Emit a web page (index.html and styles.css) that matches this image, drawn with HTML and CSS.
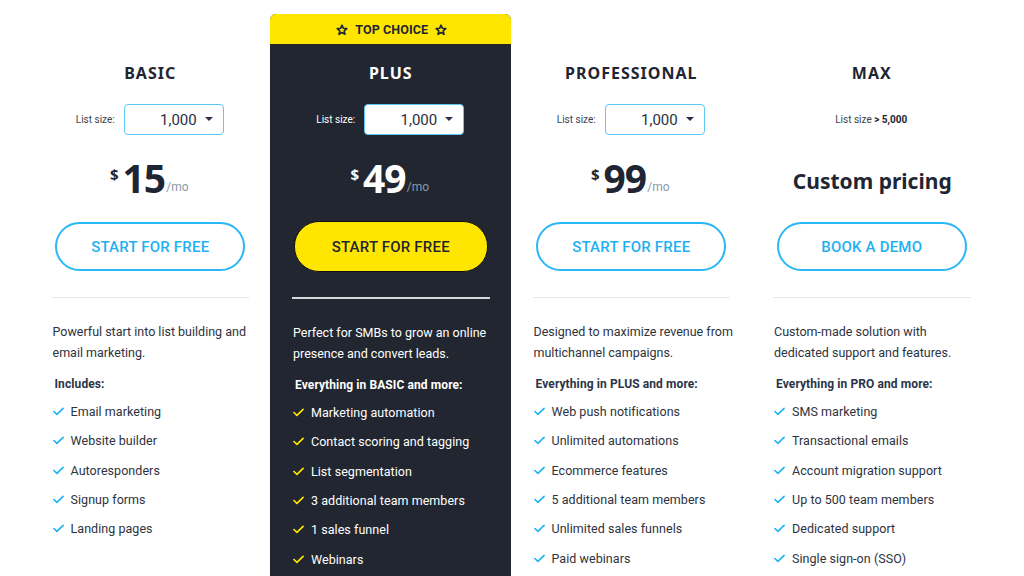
FILE: index.html
```html
<!DOCTYPE html>
<html>
<head>
<meta charset="utf-8">
<link rel="stylesheet" href="styles.css">
</head>
<body>
<svg width="0" height="0" class="defs">
  <defs>
    <symbol id="check" viewBox="0 0 12 9"><path d="M1 4.5 L4.3 7.6 L11 1" fill="none" stroke="currentColor" stroke-width="1.8" stroke-linecap="round" stroke-linejoin="round"/></symbol>
    <symbol id="star" viewBox="0 0 12 12"><path d="M6 1.2 L7.4 4.3 L10.8 4.6 L8.2 6.9 L9 10.3 L6 8.5 L3 10.3 L3.8 6.9 L1.2 4.6 L4.6 4.3 Z" fill="none" stroke="currentColor" stroke-width="1.6" stroke-linejoin="round"/></symbol>
    <symbol id="caret" viewBox="0 0 8 4"><path d="M0 0 H8 L4 4 Z" fill="currentColor"/></symbol>
  </defs>
</svg>
<main class="plans">
  <section class="plan">
    <div class="banner"></div>
    <h2 class="title">BASIC</h2>
    <div class="size-row">
      <span class="size-label">List size:</span>
      <div class="select"><span>1,000</span><svg class="caret"><use href="#caret"/></svg></div>
    </div>
    <div class="price"><span class="cur">$</span><span class="amount">15</span><span class="per">/mo</span></div>
    <a class="btn">START FOR FREE</a>
    <hr class="divider">
    <p class="desc">Powerful start into list building and email marketing.</p>
    <h3 class="inc">Includes:</h3>
    <ul class="features">
      <li><svg class="chk"><use href="#check"/></svg>Email marketing</li>
      <li><svg class="chk"><use href="#check"/></svg>Website builder</li>
      <li><svg class="chk"><use href="#check"/></svg>Autoresponders</li>
      <li><svg class="chk"><use href="#check"/></svg>Signup forms</li>
      <li><svg class="chk"><use href="#check"/></svg>Landing pages</li>
    </ul>
  </section>
  <section class="plan featured">
    <div class="banner"><svg class="star"><use href="#star"/></svg><span>TOP CHOICE</span><svg class="star"><use href="#star"/></svg></div>
    <h2 class="title">PLUS</h2>
    <div class="size-row">
      <span class="size-label">List size:</span>
      <div class="select"><span>1,000</span><svg class="caret"><use href="#caret"/></svg></div>
    </div>
    <div class="price"><span class="cur">$</span><span class="amount">49</span><span class="per">/mo</span></div>
    <a class="btn">START FOR FREE</a>
    <hr class="divider">
    <p class="desc">Perfect for SMBs to grow an online presence and convert leads.</p>
    <h3 class="inc">Everything in BASIC and more:</h3>
    <ul class="features">
      <li><svg class="chk"><use href="#check"/></svg>Marketing automation</li>
      <li><svg class="chk"><use href="#check"/></svg>Contact scoring and tagging</li>
      <li><svg class="chk"><use href="#check"/></svg>List segmentation</li>
      <li><svg class="chk"><use href="#check"/></svg>3 additional team members</li>
      <li><svg class="chk"><use href="#check"/></svg>1 sales funnel</li>
      <li><svg class="chk"><use href="#check"/></svg>Webinars</li>
    </ul>
  </section>
  <section class="plan">
    <div class="banner"></div>
    <h2 class="title">PROFESSIONAL</h2>
    <div class="size-row">
      <span class="size-label">List size:</span>
      <div class="select"><span>1,000</span><svg class="caret"><use href="#caret"/></svg></div>
    </div>
    <div class="price"><span class="cur">$</span><span class="amount">99</span><span class="per">/mo</span></div>
    <a class="btn">START FOR FREE</a>
    <hr class="divider">
    <p class="desc">Designed to maximize revenue from multichannel campaigns.</p>
    <h3 class="inc">Everything in PLUS and more:</h3>
    <ul class="features">
      <li><svg class="chk"><use href="#check"/></svg>Web push notifications</li>
      <li><svg class="chk"><use href="#check"/></svg>Unlimited automations</li>
      <li><svg class="chk"><use href="#check"/></svg>Ecommerce features</li>
      <li><svg class="chk"><use href="#check"/></svg>5 additional team members</li>
      <li><svg class="chk"><use href="#check"/></svg>Unlimited sales funnels</li>
      <li><svg class="chk"><use href="#check"/></svg>Paid webinars</li>
    </ul>
  </section>
  <section class="plan">
    <div class="banner"></div>
    <h2 class="title">MAX</h2>
    <div class="size-row">
      <span class="size-text">List size <b>&gt; 5,000</b></span>
    </div>
    <div class="price"><span class="custom">Custom pricing</span></div>
    <a class="btn">BOOK A DEMO</a>
    <hr class="divider">
    <p class="desc">Custom-made solution with dedicated support and features.</p>
    <h3 class="inc">Everything in PRO and more:</h3>
    <ul class="features">
      <li><svg class="chk"><use href="#check"/></svg>SMS marketing</li>
      <li><svg class="chk"><use href="#check"/></svg>Transactional emails</li>
      <li><svg class="chk"><use href="#check"/></svg>Account migration support</li>
      <li><svg class="chk"><use href="#check"/></svg>Up to 500 team members</li>
      <li><svg class="chk"><use href="#check"/></svg>Dedicated support</li>
      <li><svg class="chk"><use href="#check"/></svg>Single sign-on (SSO)</li>
    </ul>
  </section>
</main>
</body>
</html>
```
FILE: styles.css
```css
* { box-sizing: border-box; }
html, body { margin: 0; padding: 0; background: #fff; }
body {
  font-family: Roboto, "Liberation Sans", sans-serif;
  color: #1f2532;
  height: 576px;
  overflow: hidden;
}
.defs { position: absolute; width: 0; height: 0; }

.plans {
  width: 962px;
  margin: 0 0 0 29.5px;
  padding-top: 14px;
  display: grid;
  grid-template-columns: repeat(4, 1fr);
  min-height: 576px;
}
.plan {
  display: flex;
  flex-direction: column;
  padding: 0 21px 40px 22px;
}
.plan.featured {
  background: #212630;
  border-radius: 6px 6px 0 0;
  color: #fff;
}
.banner {
  height: 30px;
  margin: 0 -21px 0 -22px;
  display: flex;
  align-items: center;
  justify-content: center;
  gap: 7px;
}
.featured .banner {
  background: #ffe600;
  border-radius: 6px 6px 0 0;
  color: #1f2532;
  font-size: 12.5px;
  font-weight: 700;
  letter-spacing: 0.1px;
  padding: 1px 0 0 3px;
}
.star { width: 12px; height: 12px; }

.title {
  margin: 19px 0 0;
  font-family: "Noto Sans", "Open Sans", sans-serif;
  font-size: 16px;
  font-weight: 700;
  letter-spacing: 1px;
  line-height: 20px;
  text-align: center;
}
.size-row {
  height: 31px;
  margin-top: 21px;
  display: flex;
  align-items: center;
  justify-content: center;
  gap: 9px;
  padding-right: 1px;
}
.size-label { font-size: 10px; color: #3d4350; }
.featured .size-label { color: #fff; }
.size-text { font-size: 10px; color: #3d4350; }
.size-text b { color: #1f2532; }
.select {
  width: 100px;
  height: 31px;
  border: 1px solid #5cc7f8;
  border-radius: 4px;
  background: #fff;
  color: #283142;
  font-size: 15px;
  display: flex;
  align-items: center;
  justify-content: flex-end;
  padding-right: 10px;
  gap: 8px;
}
.caret { width: 8px; height: 4px; margin-top: -2px; }

.price {
  height: 56px;
  margin-top: 15px;
  display: flex;
  justify-content: center;
  align-items: center;
  padding-right: 2px;
}
.cur {
  font-family: "Noto Sans", sans-serif;
  font-weight: 700;
  font-size: 15px;
  align-self: flex-start;
  margin-top: 14px;
  margin-right: 4px;
}
.amount {
  font-family: "Noto Sans", sans-serif;
  font-weight: 700;
  font-size: 39px;
  letter-spacing: -1px;
  line-height: 56px;
}
.per {
  font-size: 12px;
  color: #8a99ad;
  align-self: flex-end;
  margin-bottom: 12px;
  margin-left: 1px;
}
.custom {
  font-family: "Noto Sans", sans-serif;
  font-weight: 700;
  font-size: 21px;
  margin: 6px 0 0 3px;
}

.btn {
  display: flex;
  align-items: center;
  justify-content: center;
  width: 190px;
  height: 49px;
  margin: 16px auto 0;
  border: 2px solid #2bb7f6;
  border-radius: 25px;
  color: #1fb0f2;
  font-size: 15px;
  font-weight: 500;
  letter-spacing: 0.2px;
}
.featured .btn {
  width: 194px;
  height: 51px;
  margin-top: 15px;
  background: #ffe600;
  border: 1px solid #111;
  color: #1f2532;
}
.divider {
  margin: 26px 0 0;
  border: 0;
  border-top: 1px solid #e3e6ea;
  height: 0;
}
.featured .divider {
  border-top: 2px solid #d6d8dc;
  margin-top: 25px;
}

.desc {
  margin: 23px -8px 0 1px;
  font-size: 12.5px;
  line-height: 21px;
  color: #2d3340;
  letter-spacing: 0;
}
.featured .desc { color: #fff; }
.inc {
  margin: 11px 0 0 3px;
  font-size: 12px;
  font-weight: 700;
  line-height: 20px;
  color: #2b3447;
  letter-spacing: 0.1px;
}
.featured .inc { color: #fff; }
.features {
  list-style: none;
  margin: 3px 0 0 1px;
  padding: 0;
}
.features li {
  display: flex;
  align-items: center;
  height: 29.3px;
  font-size: 12.5px;
  color: #2d3340;
  letter-spacing: 0.05px;
}
.featured .features li { color: #fff; }
.chk {
  width: 11px;
  height: 9px;
  margin-right: 7px;
  color: #1fb3f5;
  flex: none;
}
.featured .chk { color: #ffe600; }
```
